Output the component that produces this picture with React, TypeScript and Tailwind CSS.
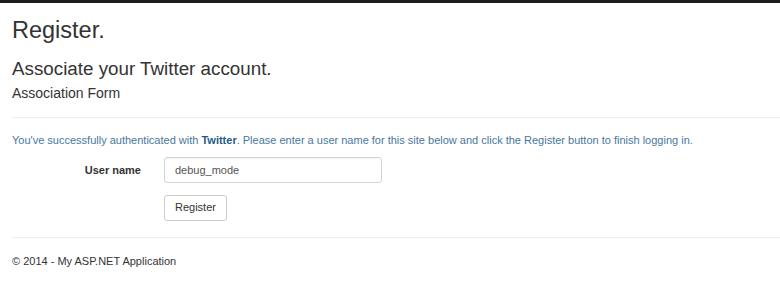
export default function App() {
  return (
    <div className="min-h-[304px] w-[780px] overflow-hidden bg-white font-['Liberation_Sans',Arial,sans-serif] text-[#333]">
      <div className="h-[3px] bg-[#1c1c1c]" />

      <div className="pl-[12px]">
        <h2 className="mt-[14px] text-[23.5px] leading-[26px] font-normal">Register.</h2>
        <h3 className="mt-[15px] text-[18.8px] leading-[21px] font-normal">Associate your Twitter account.</h3>
        <h4 className="mt-[6px] text-[14px] leading-[16px] font-normal">Association Form</h4>

        <hr className="mt-[16px] border-0 border-t border-[#eee]" />

        <p className="mt-[15px] text-[11px] leading-[15px] text-[#4677a0]">
          You've successfully authenticated with <strong className="font-bold text-[#1f5a87]">Twitter</strong>. Please
          enter a user name for this site below and click the Register button to finish logging in.
        </p>

        <div className="mt-[9px] flex items-center">
          <label className="w-[129px] text-right text-[11px] leading-[15px] font-bold text-[#333]">User name</label>
          <input
            readOnly
            value="debug_mode"
            className="ml-[23px] h-[26px] w-[218px] rounded-[3px] border border-[#d4d4d4] bg-white px-[10px] text-[11px] text-[#555] shadow-[inset_0_1px_1px_rgba(0,0,0,0.05)] outline-none"
          />
        </div>

        <div className="mt-[11px] pl-[152px]">
          <button className="h-[26px] rounded-[3px] border border-[#ccc] bg-white px-[10px] text-[11px] leading-[15px] text-[#333]">
            Register
          </button>
        </div>

        <hr className="mt-[16px] border-0 border-t border-[#eee]" />

        <footer className="mt-[16px] text-[11px] leading-[15px] text-[#333]">
          <p>© 2014 - My ASP.NET Application</p>
        </footer>
      </div>
    </div>
  );
}
